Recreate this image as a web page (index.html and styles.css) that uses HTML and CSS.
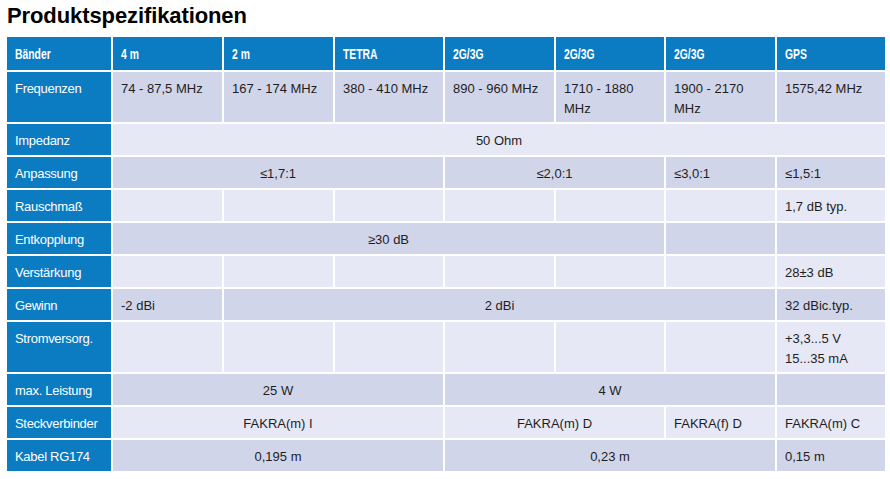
FILE: index.html
```html
<!DOCTYPE html>
<html lang="de">
<head>
  <meta charset="UTF-8">
  <meta name="viewport" content="width=device-width, initial-scale=1.0">
  <title>Produktspezifikationen</title>
  <link rel="stylesheet" href="styles.css">
</head>
<body>
  <h1>Produktspezifikationen</h1>
  <table class="specs">
    <colgroup>
      <col class="c-label">
      <col class="c-wide">
      <col class="c-wide">
      <col class="c-mid">
      <col class="c-wide">
      <col class="c-mid">
      <col class="c-wide">
      <col class="c-mid">
    </colgroup>
    <thead>
      <tr>
        <th><span>Bänder</span></th>
        <th><span>4 m</span></th>
        <th><span>2 m</span></th>
        <th><span>TETRA</span></th>
        <th><span>2G/3G</span></th>
        <th><span>2G/3G</span></th>
        <th><span>2G/3G</span></th>
        <th><span>GPS</span></th>
      </tr>
    </thead>
    <tbody>
      <tr class="tall">
        <td class="label">Frequenzen</td>
        <td>74 - 87,5 MHz</td>
        <td>167 - 174 MHz</td>
        <td>380 - 410 MHz</td>
        <td>890 - 960 MHz</td>
        <td>1710 - 1880 MHz</td>
        <td>1900 - 2170 MHz</td>
        <td>1575,42 MHz</td>
      </tr>
      <tr>
        <td class="label">Impedanz</td>
        <td colspan="7" class="center">50 Ohm</td>
      </tr>
      <tr>
        <td class="label">Anpassung</td>
        <td colspan="3" class="center">≤1,7:1</td>
        <td colspan="2" class="center">≤2,0:1</td>
        <td>≤3,0:1</td>
        <td>≤1,5:1</td>
      </tr>
      <tr>
        <td class="label">Rauschmaß</td>
        <td></td><td></td><td></td><td></td><td></td><td></td>
        <td>1,7 dB typ.</td>
      </tr>
      <tr>
        <td class="label">Entkopplung</td>
        <td colspan="5" class="center">≥30 dB</td>
        <td></td>
        <td></td>
      </tr>
      <tr>
        <td class="label">Verstärkung</td>
        <td></td><td></td><td></td><td></td><td></td><td></td>
        <td>28±3 dB</td>
      </tr>
      <tr>
        <td class="label">Gewinn</td>
        <td>-2 dBi</td>
        <td colspan="5" class="center">2 dBi</td>
        <td>32 dBic.typ.</td>
      </tr>
      <tr class="tall">
        <td class="label">Stromversorg.</td>
        <td></td><td></td><td></td><td></td><td></td><td></td>
        <td>+3,3...5 V<br>15...35 mA</td>
      </tr>
      <tr>
        <td class="label">max. Leistung</td>
        <td colspan="3" class="center">25 W</td>
        <td colspan="3" class="center">4 W</td>
        <td></td>
      </tr>
      <tr>
        <td class="label">Steckverbinder</td>
        <td colspan="3" class="center">FAKRA(m) I</td>
        <td colspan="2" class="center">FAKRA(m) D</td>
        <td>FAKRA(f) D</td>
        <td>FAKRA(m) C</td>
      </tr>
      <tr>
        <td class="label">Kabel RG174</td>
        <td colspan="3" class="center">0,195 m</td>
        <td colspan="3" class="center">0,23 m</td>
        <td>0,15 m</td>
      </tr>
    </tbody>
  </table>
</body>
</html>
```

FILE: styles.css
```css
body {
  margin: 0;
  padding: 1px 3px 0 5px;
  background-color: #fff;
  font-family: "Liberation Sans", Arial, sans-serif;
  color: #1e1e1e;
}
h1 {
  margin: 0 0 4px 2px;
  font-size: 22px;
  line-height: 30px;
  font-weight: bold;
  color: #000;
  letter-spacing: -0.1px;
}
.specs {
  width: 882px;
  table-layout: fixed;
  border-collapse: separate;
  border-spacing: 2px;
  font-size: 13px;
}
.c-label { width: 104px; }
.c-wide { width: 109px; }
.c-mid { width: 108px; }

.specs th,
.specs td {
  padding: 7px 8px 3px;
  line-height: 20px;
  text-align: left;
  vertical-align: top;
}
.specs th {
  height: 23px;
  background-color: #0b7bc2;
  color: #fff;
  font-size: 14px;
  font-weight: bold;
  white-space: nowrap;
}
/* schmale Kopfschrift */
.specs th span {
  display: inline-block;
  transform: scaleX(0.74);
  transform-origin: left center;
}
.specs td {
  height: 21px;
  background-color: #e6e8f5;
}
.specs tbody tr:nth-child(odd) td {
  background-color: #d1d5ea;
}
.specs tr.tall td {
  height: 40px;
}
.specs td.label {
  background-color: #0b7bc2;
  color: #fff;
  letter-spacing: -0.3px;
}
.specs tbody tr:nth-child(odd) td.label {
  background-color: #0b7bc2;
}
.center {
  text-align: center !important;
}
```
